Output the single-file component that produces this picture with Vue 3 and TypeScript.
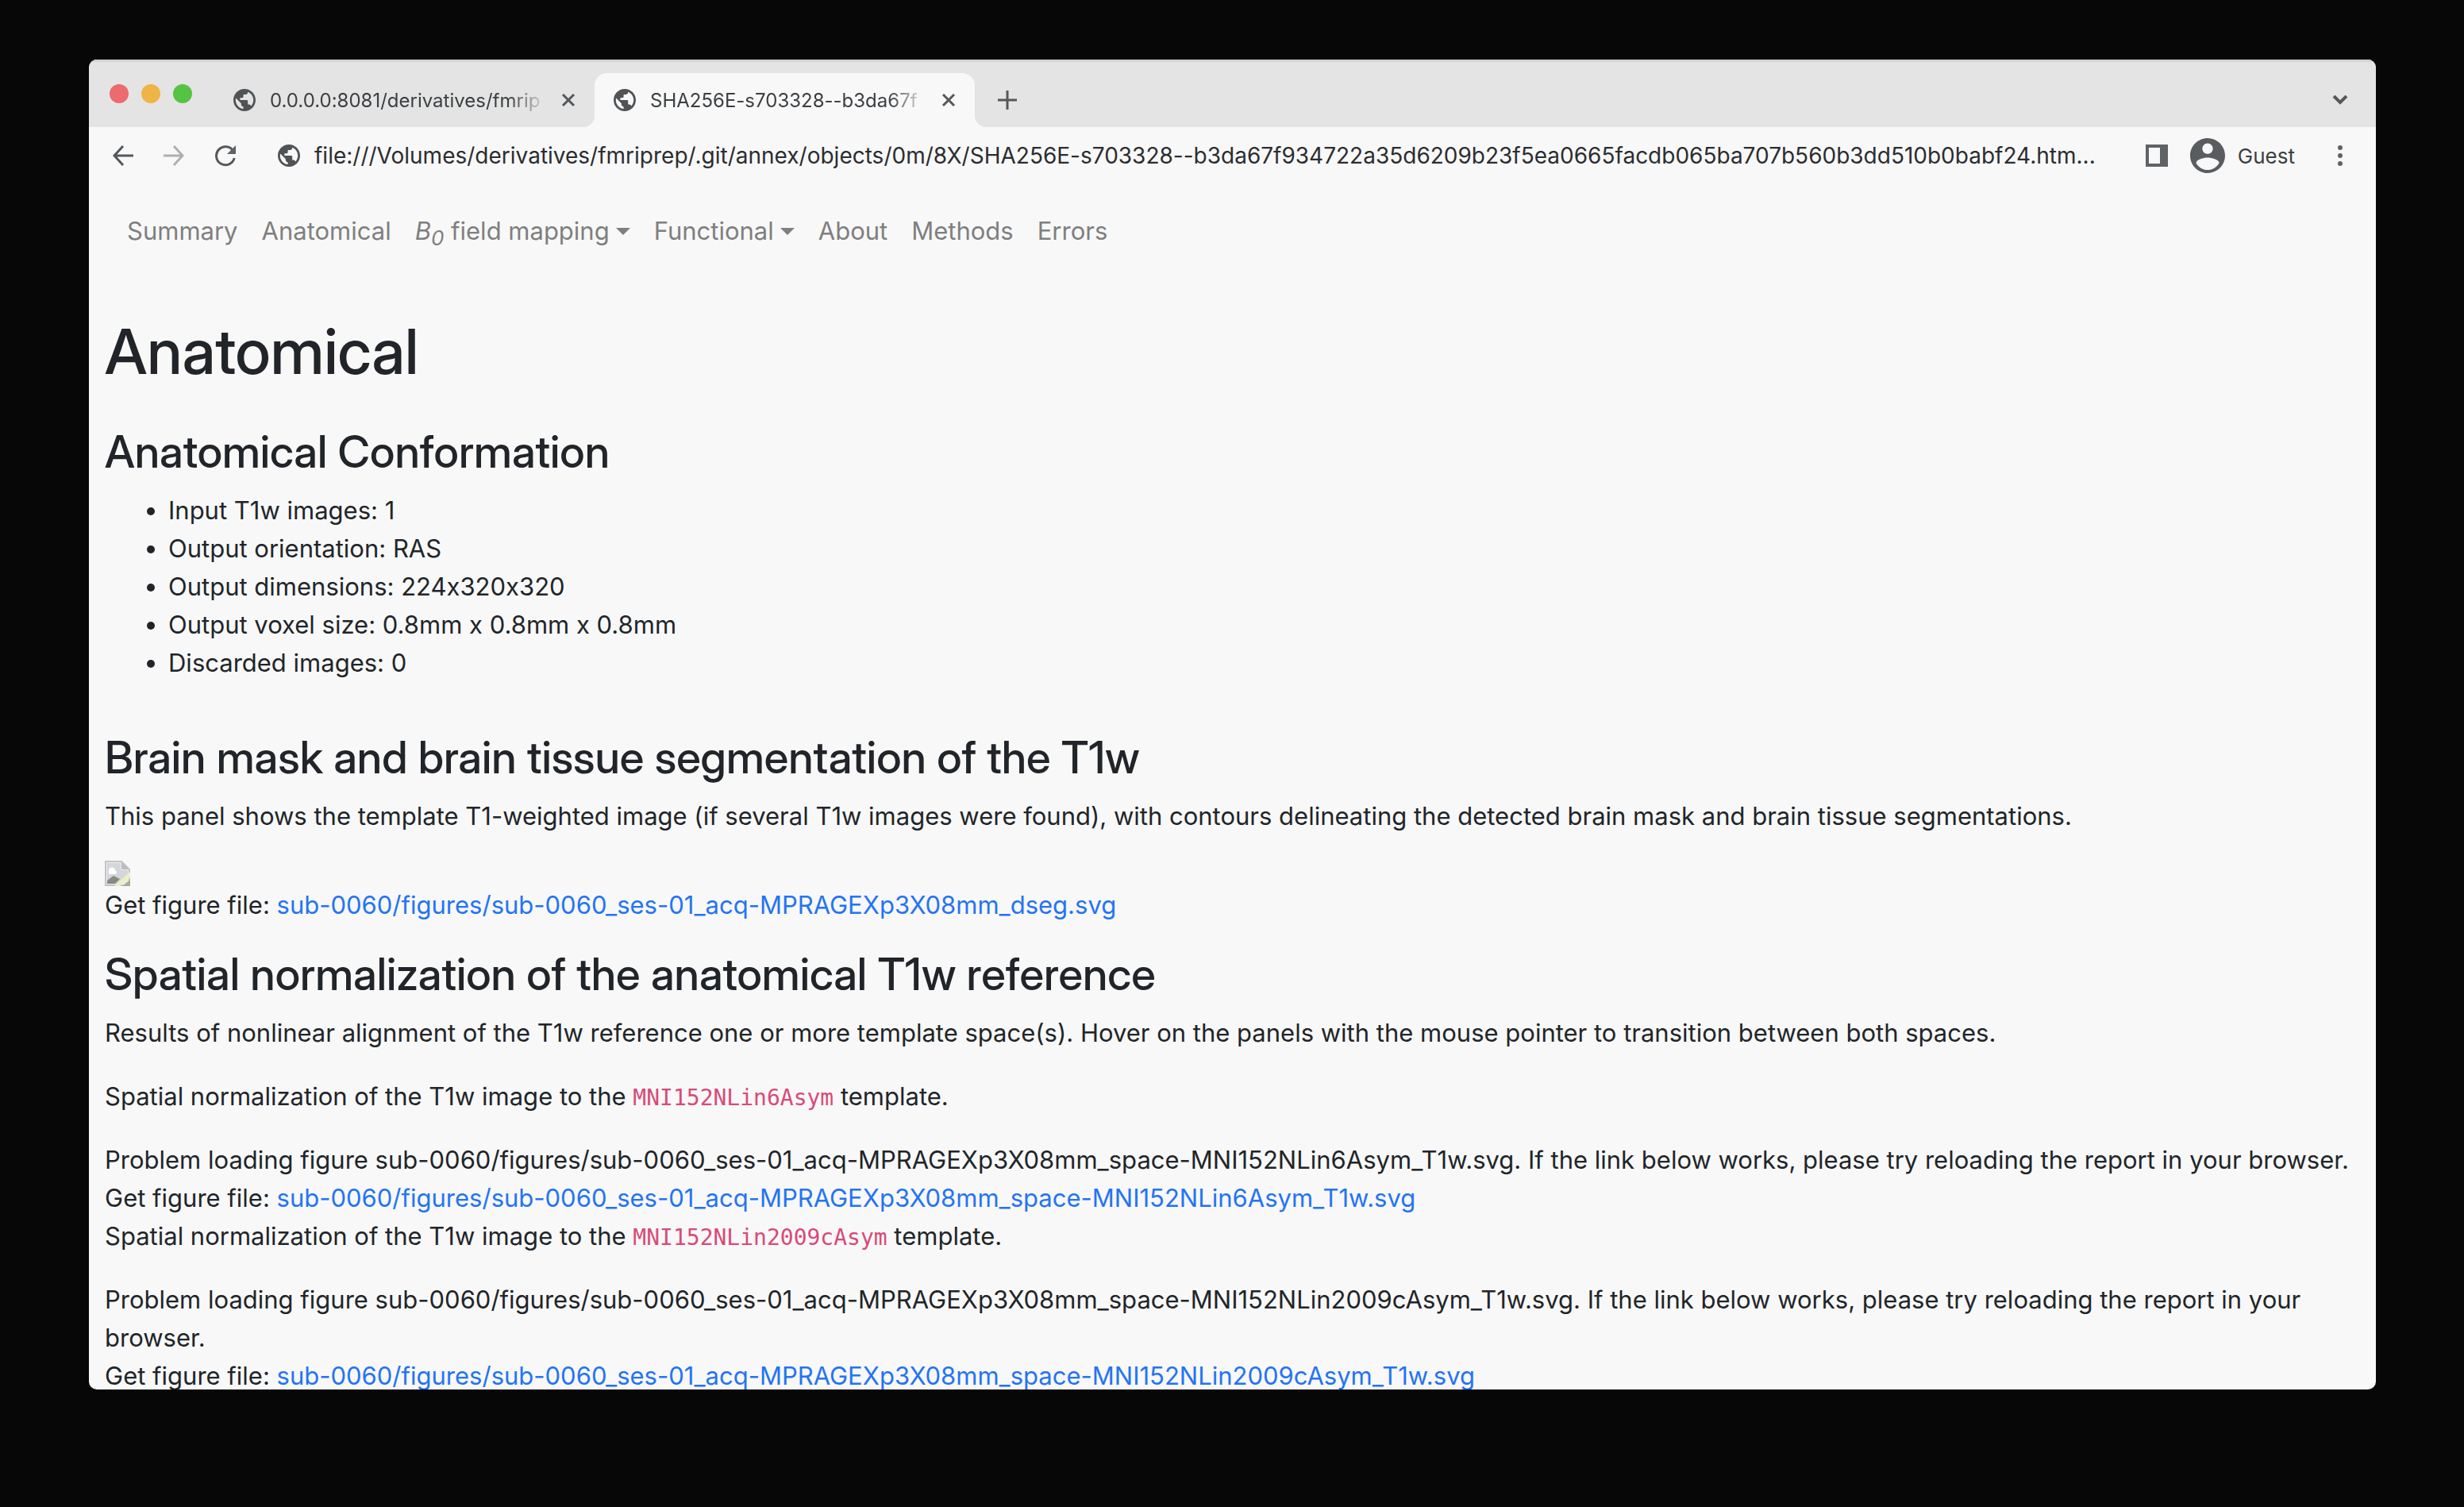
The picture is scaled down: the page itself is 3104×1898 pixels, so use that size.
<script setup lang="ts">
import { ref } from 'vue'

interface Tab { title: string; active: boolean }
interface NavItem { label: string; math?: boolean; menu?: boolean }
interface Panel { space: string; figure: string }

const tabs: Tab[] = [
  { title: '0.0.0.0:8081/derivatives/fmrip', active: false },
  { title: 'SHA256E-s703328--b3da67f', active: true },
]

const address = ref(
  'file:///Volumes/derivatives/fmriprep/.git/annex/objects/0m/8X/SHA256E-s703328--b3da67f934722a35d6209b23f5ea0665facdb065ba707b560b3dd510b0babf24.htm...',
)

const nav: NavItem[] = [
  { label: 'Summary' },
  { label: 'Anatomical' },
  { label: 'field mapping', math: true, menu: true },
  { label: 'Functional', menu: true },
  { label: 'About' },
  { label: 'Methods' },
  { label: 'Errors' },
]

const conformation: string[] = [
  'Input T1w images: 1',
  'Output orientation: RAS',
  'Output dimensions: 224x320x320',
  'Output voxel size: 0.8mm x 0.8mm x 0.8mm',
  'Discarded images: 0',
]

const base = 'sub-0060/figures/sub-0060_ses-01_acq-MPRAGEXp3X08mm_'
const segmentation = `${base}dseg.svg`
const panels: Panel[] = ['MNI152NLin6Asym', 'MNI152NLin2009cAsym'].map((space) => ({
  space,
  figure: `${base}space-${space}_T1w.svg`,
}))

const globe =
  'M12 2C6.48 2 2 6.48 2 12s4.48 10 10 10 10-4.48 10-10S17.52 2 12 2zm-1 17.93c-3.95-.49-7-3.85-7-7.93 0-.62.08-1.21.21-1.79L9 15v1c0 1.1.9 2 2 2v1.93zm6.9-2.54c-.26-.81-1-1.39-1.9-1.39h-1v-3c0-.55-.45-1-1-1H8v-2h2c.55 0 1-.45 1-1V7h2c1.1 0 2-.9 2-2v-.41c2.93 1.19 5 4.06 5 7.41 0 2.08-.8 3.97-2.1 5.39z'
</script>

<template>
  <div class="desktop">
    <div class="window">
      <header class="strip">
        <div class="lights">
          <button class="light red" aria-label="Close window"></button>
          <button class="light amber" aria-label="Minimise window"></button>
          <button class="light green" aria-label="Zoom window"></button>
        </div>
        <div v-for="tab in tabs" :key="tab.title" class="tab" :class="{ active: tab.active }">
          <svg class="globe" viewBox="2 2 20 20" aria-hidden="true"><path :d="globe" /></svg>
          <span class="title">{{ tab.title }}</span>
          <button class="icon" aria-label="Close tab">
            <svg width="18" height="18" viewBox="0 0 18 18"><path d="M2 2l14 14M16 2L2 16" /></svg>
          </button>
        </div>
        <button class="icon plus" aria-label="New tab">
          <svg width="24" height="24" viewBox="0 0 24 24"><path d="M12 0v24M0 12h24" /></svg>
        </button>
        <button class="icon chevron" aria-label="Search tabs">
          <svg width="20" height="12" viewBox="0 0 20 12"><path d="M2 1l8 8 8-8" /></svg>
        </button>
      </header>

      <div class="toolbar">
        <div class="history">
          <button class="icon" aria-label="Back">
            <svg width="26" height="26" viewBox="0 0 26 26"><path d="M26 13H2M13 1L2 13l11 12" /></svg>
          </button>
          <button class="icon faded" aria-label="Forward" disabled>
            <svg width="26" height="26" viewBox="0 0 26 26"><path d="M0 13h24M13 1l11 12-11 12" /></svg>
          </button>
          <button class="icon" aria-label="Reload">
            <svg width="28" height="28" viewBox="0 0 28 28">
              <path d="M24 8.500A11.500 11.500 0 1 0 25.200 17" />
              <path class="solid" d="M27 1v11H16z" />
            </svg>
          </button>
        </div>
        <svg class="globe" viewBox="2 2 20 20" aria-hidden="true"><path :d="globe" /></svg>
        <input v-model="address" class="address" type="text" aria-label="Address" spellcheck="false" />
        <button class="icon" aria-label="Side panel">
          <svg width="28" height="28" viewBox="0 0 28 28">
            <path class="solid" d="M0 0h28v28H0zM4 4v20h14V4z" fill-rule="evenodd" />
          </svg>
        </button>
        <button class="guest">
          <svg width="44" height="44" viewBox="2 2 20 20" aria-hidden="true">
            <path d="M12 2C6.480 2 2 6.480 2 12s4.480 10 10 10 10-4.480 10-10S17.520 2 12 2zm0 3c1.660 0 3 1.340 3 3s-1.340 3-3 3-3-1.340-3-3 1.340-3 3-3zm0 15.200c-2.700 0-5.200-1.500-6.600-4 .03-1.990 4.400-3.080 6.600-3.080s6.570 1.090 6.600 3.080c-1.400 2.500-3.900 4-6.600 4z" />
          </svg>
          <span>Guest</span>
        </button>
        <button class="icon dots" aria-label="Menu">
          <svg width="6" height="28" viewBox="0 0 6 28">
            <circle cx="3" cy="4" r="3" /><circle cx="3" cy="14" r="3" /><circle cx="3" cy="24" r="3" />
          </svg>
        </button>
      </div>

      <nav class="menu">
        <a v-for="item in nav" :key="item.label" href="#">
          <template v-if="item.math"><i>B<sub>0</sub></i>&nbsp;</template>{{ item.label }}<span v-if="item.menu" class="caret"></span>
        </a>
      </nav>

      <main class="report">
        <h1>Anatomical</h1>

        <section>
          <h2>Anatomical Conformation</h2>
          <ul>
            <li v-for="line in conformation" :key="line">{{ line }}</li>
          </ul>
        </section>

        <section>
          <h2>Brain mask and brain tissue segmentation of the T1w</h2>
          <p>This panel shows the template T1-weighted image (if several T1w images were found), with contours delineating the detected brain mask and brain tissue segmentations.</p>
          <svg class="broken" width="32" height="32" viewBox="0 0 32 32" role="img" aria-label="Missing figure">
            <path d="M1 1h20l10 10v20H1z" fill="#ececec" stroke="#c4c4c4" stroke-width="2" />
            <path d="M3 3h17v9h9v5L15 29H3z" fill="#d3d6da" />
            <path d="M5 13a4 4 0 0 1 8-1 3 3 0 0 1 1 5H5z" fill="#fff" />
            <path d="M3 29v-4l8-6 8 4-6 6z" fill="#868a80" />
            <path d="M32 14v7L19 32h-7z" fill="#eef0c4" />
            <path d="M22 32l10-8v8z" fill="#a9ad94" />
            <path d="M21 1v10h10z" fill="#bdbdbd" />
          </svg>
          <div>Get figure file: <a href="#">{{ segmentation }}</a></div>
        </section>

        <section>
          <h2>Spatial normalization of the anatomical T1w reference</h2>
          <p>Results of nonlinear alignment of the T1w reference one or more template space(s). Hover on the panels with the mouse pointer to transition between both spaces.</p>
          <template v-for="panel in panels" :key="panel.space">
            <p>Spatial normalization of the T1w image to the <code>{{ panel.space }}</code> template.</p>
            <div>Problem loading figure {{ panel.figure }}. If the link below works, please try reloading the report in your browser.</div>
            <div>Get figure file: <a href="#">{{ panel.figure }}</a></div>
          </template>
        </section>
      </main>
    </div>
  </div>
</template>

<style>
body {
  margin: 0;
  background: #070707;
}
</style>

<style scoped>
.desktop {
  box-sizing: border-box;
  height: 100vh;
  padding: 75px 111px 148px 112px;
  font-family: Inter, "Liberation Sans", sans-serif;
  font-feature-settings: "calt" 0;
  color: #212529;
}
.window {
  display: flex;
  flex-direction: column;
  height: 100%;
  overflow: hidden;
  border-radius: 10px;
  background: #f8f8f8;
}
button {
  margin: 0;
  padding: 0;
  border: 0;
  background: none;
  font: inherit;
  color: inherit;
}
svg {
  display: block;
  flex: none;
}
.icon {
  display: flex;
  flex: none;
}
.icon svg {
  fill: none;
  stroke: #55585b;
  stroke-width: 3;
}
.icon .solid,
.dots circle {
  fill: #606366;
  stroke: none;
}
.globe {
  width: 28px;
  height: 28px;
  fill: #505356;
}

/* Tab strip */
.strip {
  box-sizing: border-box;
  display: flex;
  flex: none;
  height: 85px;
  padding: 14px 35px 0 26px;
  border-top: 3px solid #d2d2d2;
  background: #e4e4e4;
}
.lights {
  display: flex;
  gap: 16px;
  margin: 14px 28px 0 0;
}
.light {
  width: 24px;
  height: 24px;
  border-radius: 50%;
}
.red { background: #ed6a6e; }
.amber { background: #eeb446; }
.green { background: #57c344; }
.tab {
  box-sizing: border-box;
  position: relative;
  display: flex;
  align-items: center;
  width: 479px;
  padding: 0 24px;
  border-radius: 16px 16px 0 0;
  font-size: 24px;
  color: #3c3f42;
}
.tab.active {
  background: #f8f8f8;
}
.tab.active::before,
.tab.active::after {
  content: "";
  position: absolute;
  bottom: 0;
  width: 14px;
  height: 14px;
}
.tab.active::before {
  right: 100%;
  background: radial-gradient(circle at 0 0, transparent 14px, #f8f8f8 14px);
}
.tab.active::after {
  left: 100%;
  background: radial-gradient(circle at 100% 0, transparent 14px, #f8f8f8 14px);
}
.title {
  flex: 1;
  min-width: 0;
  margin: 0 18px;
  overflow: hidden;
  white-space: nowrap;
  -webkit-mask-image: linear-gradient(to right, #000 86%, transparent);
  mask-image: linear-gradient(to right, #000 86%, transparent);
}
.plus {
  align-items: center;
  margin-left: 29px;
}
.chevron {
  align-items: center;
  margin-left: auto;
}
.chevron svg {
  stroke-width: 4;
}

/* Address bar */
.toolbar {
  display: flex;
  flex: none;
  align-items: center;
  height: 72px;
  padding: 0 42px 0 30px;
}
.history {
  display: flex;
  align-items: center;
  gap: 38px;
  margin-right: 52px;
}
.faded {
  opacity: 0.45;
}
.address {
  flex: 1;
  min-width: 0;
  margin: 0 24px 0 18px;
  padding: 0;
  border: 0;
  outline: 0;
  background: none;
  font-family: inherit;
  font-feature-settings: inherit;
  font-size: 28px;
  line-height: 40px;
  color: #2b2d30;
}
.guest {
  display: flex;
  align-items: center;
  gap: 16px;
  margin: 0 54px 0 28px;
  font-size: 26px;
  color: #3c3f42;
}
.guest svg {
  fill: #5a5d60;
}

/* Report navigation */
.menu {
  display: flex;
  flex: none;
  gap: 30px;
  padding: 35px 48px 0;
  font-size: 31px;
  line-height: 48px;
}
.menu a {
  display: flex;
  align-items: center;
  color: #7f7f7f;
  text-decoration: none;
  white-space: nowrap;
}
.menu sub {
  font-size: 26px;
  line-height: 0;
}
.caret {
  margin-left: 8px;
  border-top: 9px solid #7f7f7f;
  border-right: 9px solid transparent;
  border-left: 9px solid transparent;
}

/* Report body */
.report {
  flex: 1;
  min-height: 0;
  overflow: hidden;
  padding: 79px 20px 0;
  font-size: 31px;
  line-height: 48px;
}
h1,
h2 {
  margin: 0 0 16px;
  font-family: "Inter Display", Inter, "Liberation Sans", sans-serif;
  font-weight: 500;
}
h1 {
  font-size: 79px;
  line-height: 96px;
}
h2 {
  padding-top: 30px;
  font-size: 56px;
  line-height: 67px;
}
ul {
  margin: 0 0 32px;
  padding-left: 80px;
}
p {
  margin: 0 0 32px;
}
a {
  color: #2474f2;
  text-decoration: none;
}
code {
  font-family: "DejaVu Sans Mono", monospace;
  font-size: 28px;
  line-height: 0;
  color: #d84a78;
}
</style>
